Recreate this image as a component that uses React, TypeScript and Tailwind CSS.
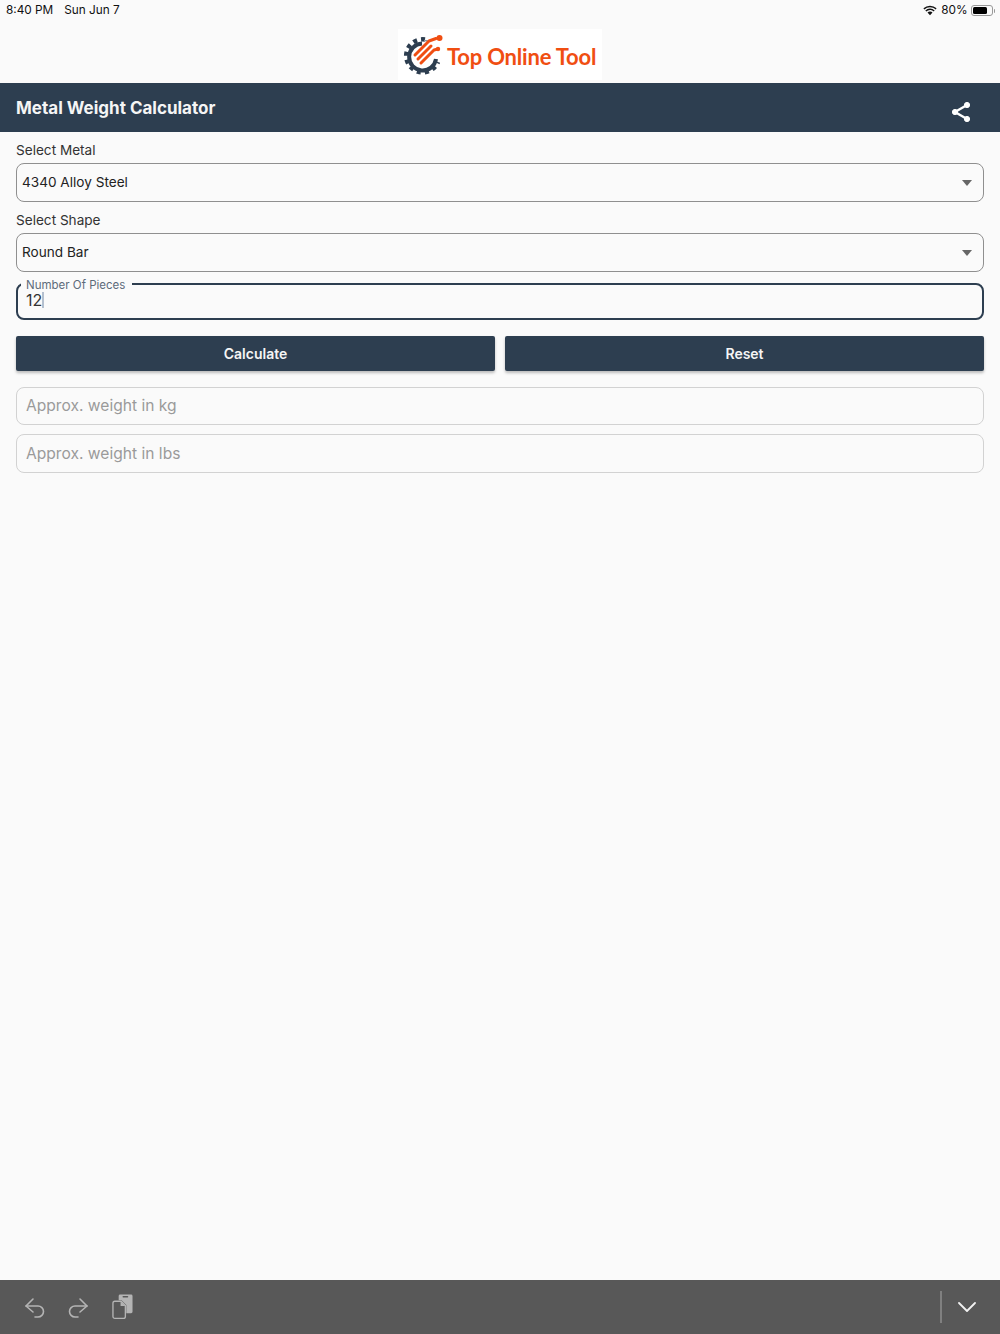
const fontStack = "font-['Inter','Liberation_Sans',sans-serif]";

function CaretDown() {
  return (
    <svg width="10" height="6" viewBox="0 0 10 6" className="shrink-0">
      <path d="M0 0h10L5 6z" fill="#666" />
    </svg>
  );
}

function SelectBox({ label, value }: { label: string; value: string }) {
  return (
    <div>
      <div className="h-[31px] pt-[10px] text-[13.6px] leading-[17px] text-[#333]">{label}</div>
      <div className="flex h-[39px] items-center justify-between rounded-[8px] border border-[#8f8f8f] pl-[5px] pr-[11px]">
        <span className="text-[13.6px] text-[#222]">{value}</span>
        <CaretDown />
      </div>
    </div>
  );
}

function OutputBox({ placeholder, className }: { placeholder: string; className: string }) {
  return (
    <div className={`flex items-center rounded-[8px] border border-[#d2d2d2] px-[9px] text-[15.600px] text-[#9a9a9a] ${className}`}>
      {placeholder}
    </div>
  );
}

function Logo() {
  return (
    <div className="flex h-[51px] w-[204px] items-center gap-[4px] bg-white pl-[5px]">
      <svg width="40" height="42" viewBox="0 0 40 42">
        {/* gear */}
        <path d="M22 5.500A16.500 16.500 0 1 0 35 28" fill="none" stroke="#2d3e50" strokeWidth="4.500" strokeDasharray="4 4" />
        <path d="M19 9.500A13.500 13.500 0 1 0 33 25" fill="none" stroke="#2d3e50" strokeWidth="4" />
        <path d="M21 6.500A14 14 0 0 1 26 7.500" fill="none" stroke="#8a949e" strokeWidth="1.500" />
        {/* stripes */}
        <path d="M12 21 26 7 33 4.500M15 25 28 12M18 29 31 16 35 15" fill="none" stroke="#f04e12" strokeWidth="3" strokeLinecap="round" strokeLinejoin="round" />
        <circle cx="36.500" cy="4" r="3" fill="#f04e12" />
        <circle cx="35" cy="15" r="2.200" fill="#f04e12" />
      </svg>
      <span className="font-['Lato',sans-serif] pt-[5px] text-[22px] font-bold leading-none tracking-[-0.2px] whitespace-nowrap text-[#f04e12]">
        Top Online Tool
      </span>
    </div>
  );
}

function Toolbar() {
  return (
    <div className="mt-auto flex h-[54px] items-center justify-between bg-[#585858] pl-[24px] pr-[24px]">
      <div className="flex items-center gap-[21px] text-[#b4b4b4]">
        <svg width="22" height="22" viewBox="0 0 22 22" fill="none" stroke="currentColor" strokeWidth="1.6" strokeLinecap="round" strokeLinejoin="round">
          <path d="M9 3 2 10l7 6" />
          <path d="M2 10h12a5.500 5.500 0 0 1 0 11h-3" />
        </svg>
        <svg width="22" height="22" viewBox="0 0 22 22" fill="none" stroke="currentColor" strokeWidth="1.6" strokeLinecap="round" strokeLinejoin="round">
          <path d="m13 3 7 7-7 6" />
          <path d="M20 10H8a5.500 5.500 0 0 0 0 11h3" />
        </svg>
        <svg width="21" height="26" viewBox="0 0 22 26" className="ml-[2px]">
          <path d="M7 1.500a1.500 1.500 0 0 1 1.500-1.500H20a1.500 1.500 0 0 1 1.500 1.500V18a1.500 1.500 0 0 1-1.500 1.500h-5V11L10 6H7z" fill="currentColor" />
          <rect x="11" y="1.500" width="6" height="1.500" rx="0.750" fill="#585858" />
          <path d="M1 9a2 2 0 0 1 2-2h6.500L14 11.500V23a2 2 0 0 1-2 2H3a2 2 0 0 1-2-2z" fill="none" stroke="currentColor" strokeWidth="1.4" />
          <path d="M9 7v5h5z" fill="currentColor" />
        </svg>
      </div>
      <div className="flex items-center gap-[16px]">
        <div className="h-[32px] w-[2px] bg-[#808080]" />
        <svg width="18" height="10" viewBox="0 0 18 10" fill="none" stroke="#f2f2f2" strokeWidth="1.8" strokeLinecap="round" strokeLinejoin="round">
          <path d="m1 1 8 8 8-8" />
        </svg>
      </div>
    </div>
  );
}

export default function App() {
  return (
    <div className={`flex h-[1334px] flex-col bg-[#fafafa] ${fontStack}`}>
      {/* status bar */}
      <div className="flex h-[20px] items-center justify-between pl-[6px] pr-[5px] pt-[1px] text-[11.800px] text-[#111]">
        <div className="flex gap-[11px]">
          <span>8:40 PM</span>
          <span>Sun Jun 7</span>
        </div>
        <div className="flex items-center gap-[3px]">
          <svg width="14" height="11" viewBox="0 0 14 11" className="mr-[1px]">
            <path d="M7 2.200c2.200 0 4.100.8 5.600 2.200l1-1.100A9.700 9.700 0 0 0 7 .7 9.700 9.700 0 0 0 .4 3.300l1 1.100A8.100 8.100 0 0 1 7 2.200z" fill="#111" />
            <path d="M7 5c1.400 0 2.700.5 3.700 1.500l1-1.100A6.800 6.800 0 0 0 7 3.500a6.800 6.800 0 0 0-4.700 1.900l1 1.100A5.300 5.300 0 0 1 7 5z" fill="#111" />
            <path d="M7 6.600c-1 0-1.800.4-2.500 1L7 10.300l2.500-2.700c-.7-.6-1.500-1-2.500-1z" fill="#111" />
          </svg>
          <span>80%</span>
          <div className="flex items-center gap-[1px]">
            <div className="h-[11px] w-[22px] rounded-[3px] border border-[#999] p-[1px]">
              <div className="h-full w-[80%] rounded-[1.500px] bg-black" />
            </div>
            <div className="h-[4px] w-[1.500px] rounded-r-[1px] bg-[#999]" />
          </div>
        </div>
      </div>

      {/* logo */}
      <div className="flex h-[63px] items-start justify-center pt-[9px]">
        <Logo />
      </div>

      {/* header */}
      <div className="flex h-[49px] items-center justify-between pl-[16px] pr-[28px] bg-[#2d3e50]">
        <h1 className="pt-[2px] text-[17px] font-bold text-[#f5f5f5]">Metal Weight Calculator</h1>
        <svg width="22" height="22" viewBox="0 0 22 22" className="mt-[9px]" fill="#fff" stroke="#fff">
          <path d="M17 4 5 11l12 7" fill="none" strokeWidth="2.400" />
          <circle cx="17" cy="4" r="2.600" />
          <circle cx="5" cy="11" r="2.600" />
          <circle cx="17" cy="18" r="2.600" />
        </svg>
      </div>

      {/* form */}
      <div className="flex flex-col px-[16px]">
        <SelectBox label="Select Metal" value="4340 Alloy Steel" />
        <SelectBox label="Select Shape" value="Round Bar" />

        <div className="relative mt-[11px] h-[37px] rounded-[8px] border-2 border-[#2d3e50] pl-[8px] pt-[6px]">
          <span className="absolute -top-[5px] left-[3px] bg-[#fafafa] pl-[5px] pr-[7px] text-[11.500px] leading-[10px] text-[#5d6b7a]">
            Number Of Pieces
          </span>
          <div className="flex items-center text-[16px] leading-[18px] text-[#333]">
            12
            <div className="h-[16px] w-[2px] bg-[#b4c0cf]" />
          </div>
        </div>

        <div className="mt-[16px] flex gap-[10px]">
          <button className="h-[35px] flex-1 rounded-[2px] bg-[#2d3e50] pb-[1px] text-[14px] font-semibold text-[#f5f5f5] shadow-[0_2px_3px_rgba(0,0,0,0.25)]">
            Calculate
          </button>
          <button className="h-[35px] flex-1 rounded-[2px] bg-[#2d3e50] pb-[1px] text-[14px] font-semibold text-[#f5f5f5] shadow-[0_2px_3px_rgba(0,0,0,0.25)]">
            Reset
          </button>
        </div>

        <div className="mt-[16px] flex flex-col gap-[9px]">
          <OutputBox placeholder="Approx. weight in kg" className="h-[38px]" />
          <OutputBox placeholder="Approx. weight in lbs" className="h-[39px]" />
        </div>
      </div>

      <Toolbar />
    </div>
  );
}
